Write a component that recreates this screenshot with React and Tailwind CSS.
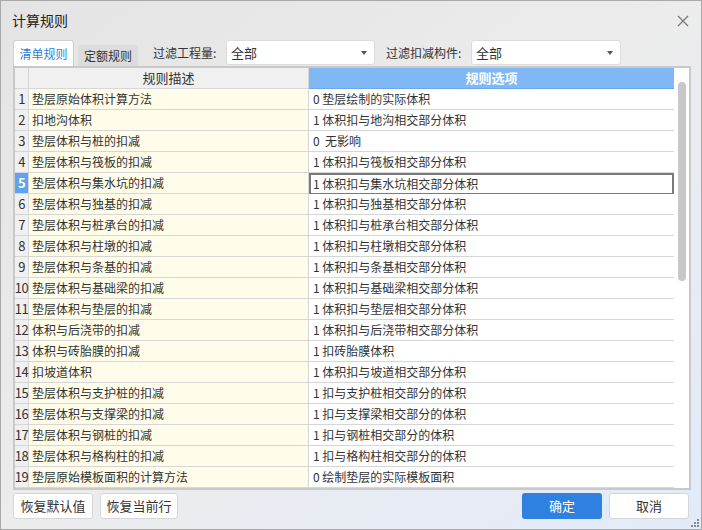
import React from 'react';

const rows = [
  ['垫层原始体积计算方法', '0 垫层绘制的实际体积'],
  ['扣地沟体积', '1 体积扣与地沟相交部分体积'],
  ['垫层体积与桩的扣减', '0  无影响'],
  ['垫层体积与筏板的扣减', '1 体积扣与筏板相交部分体积'],
  ['垫层体积与集水坑的扣减', '1 体积扣与集水坑相交部分体积'],
  ['垫层体积与独基的扣减', '1 体积扣与独基相交部分体积'],
  ['垫层体积与桩承台的扣减', '1 体积扣与桩承台相交部分体积'],
  ['垫层体积与柱墩的扣减', '1 体积扣与柱墩相交部分体积'],
  ['垫层体积与条基的扣减', '1 体积扣与条基相交部分体积'],
  ['垫层体积与基础梁的扣减', '1 体积扣与基础梁相交部分体积'],
  ['垫层体积与垫层的扣减', '1 体积扣与垫层相交部分体积'],
  ['体积与后浇带的扣减', '1 体积扣与后浇带相交部分体积'],
  ['体积与砖胎膜的扣减', '1 扣砖胎膜体积'],
  ['扣坡道体积', '1 体积扣与坡道相交部分体积'],
  ['垫层体积与支护桩的扣减', '1 扣与支护桩相交部分的体积'],
  ['垫层体积与支撑梁的扣减', '1 扣与支撑梁相交部分的体积'],
  ['垫层体积与钢桩的扣减', '1 扣与钢桩相交部分的体积'],
  ['垫层体积与格构柱的扣减', '1 扣与格构柱相交部分的体积'],
  ['垫层原始模板面积的计算方法', '0 绘制垫层的实际模板面积'],
];

const Select = ({ w }) => (
  <div className={`${w} h-[25px] bg-white rounded-[3px] border border-[#dcdcdc] flex items-center justify-between pl-[4px] pr-[7px]`}>
    <span className="text-[13px]">全部</span>
    <span className="w-0 h-0 border-l-[3px] border-r-[3px] border-t-[4px] border-l-transparent border-r-transparent border-t-[#555]" />
  </div>
);

const App = () => {
  return (
    <div
      className="w-[702px] h-[530px] border border-[#a9a9a9] bg-linear-to-br from-[#e4e4e4] via-[#ececec] to-[#e2eafa] text-[12px] text-[#333] relative overflow-hidden flex flex-col"
      style={{ fontFamily: '"Noto Sans CJK SC", "Noto Sans", sans-serif' }}
    >
      {/* title bar */}
      <div className="h-[39px] flex items-center justify-between pl-[11px] pr-[12px]">
        <span className="text-[14px] text-[#222]">计算规则</span>
        <svg width="12" height="12" viewBox="0 0 12 12" className="stroke-[#777]">
          <path d="M1 1L11 11M11 1L1 11" strokeWidth="1.2" fill="none" />
        </svg>
      </div>

      {/* tabs + filters */}
      <div className="h-[26px] flex items-end pl-[12px]">
        <div className="w-[61px] h-[26px] bg-white border border-b-0 border-[#cfcfcf] rounded-t-[3px] flex items-center justify-center text-[#2f7fd8]">
          清单规则
        </div>
        <div className="ml-[4px] w-[60px] h-[21px] bg-[#dcdcdc] rounded-t-[3px] flex items-center justify-center text-[#333]">
          定额规则
        </div>
        <div className="self-start ml-[15px] h-[25px] flex items-center">
          <span className="w-[73px]">过滤工程量:</span>
          <Select w="w-[149px]" />
          <span className="ml-[11px] w-[85px]">过滤扣减构件:</span>
          <Select w="w-[150px]" />
        </div>
      </div>

      {/* table */}
      <div className="mx-[12px] w-[678px] border-2 border-[#c9c9c9] flex bg-white">
        <div className="grid grid-cols-[14px_280px_365px] w-[659px]">
          <div className="h-[21px] bg-[#f0f0f0] border-r border-b border-[#d6d6d6]" />
          <div className="h-[21px] bg-[#f0f0f0] border-r border-b border-[#d6d6d6] flex items-center justify-center text-[13px]">规则描述</div>
          <div className="h-[21px] bg-[#80b8f6] border-b border-[#6aa7ec] flex items-center justify-center text-white font-bold text-[13px]">规则选项</div>
          {rows.map(([desc, opt], i) => {
            const sel = i === 4;
            return (
              <React.Fragment key={i}>
                <div
                  className={`h-[21px] border-r border-b border-[#d6d6d6] flex items-center justify-center tracking-[-0.5px] text-[13px] ${
                    sel ? 'bg-[#5ea3ef] text-white font-bold' : 'bg-[#f0f0f0]'
                  }`}
                >
                  {i + 1}
                </div>
                <div className="h-[21px] bg-[#fffde9] border-r border-b border-[#d6d6d6] flex items-center pl-[3px] whitespace-pre">{desc}</div>
                <div
                  className={`h-[21px] bg-white border-b flex items-center whitespace-pre ${
                    sel ? 'border-2 border-[#7a7a7a] pl-[2px]' : 'border-[#d6d6d6] pl-[4px]'
                  }`}
                >
                  {opt}
                </div>
              </React.Fragment>
            );
          })}
        </div>
        <div className="w-[15px] flex justify-center pt-[14px]">
          <div className="w-[8px] h-[199px] bg-[#c8c8c8] rounded-[4px]" />
        </div>
      </div>

      {/* buttons */}
      <div className="mt-[3px] px-[12px] flex items-center text-[13px]">
        <button className="w-[80px] h-[26px] bg-white border border-[#d6d6d6] rounded-[3px]">恢复默认值</button>
        <button className="ml-[7px] w-[78px] h-[26px] bg-white border border-[#d6d6d6] rounded-[3px]">恢复当前行</button>
        <button className="ml-auto w-[80px] h-[26px] bg-[#2f81e1] text-white rounded-[3px]">确定</button>
        <button className="ml-[7px] w-[80px] h-[26px] bg-white border border-[#d6d6d6] rounded-[3px]">取消</button>
      </div>

      {/* resize grip */}
      <svg width="8" height="8" viewBox="0 0 8 8" className="absolute right-[2px] bottom-[2px] fill-[#8a8a8a]">
        <rect x="6" y="0" width="2" height="2" />
        <rect x="3" y="3" width="2" height="2" />
        <rect x="6" y="3" width="2" height="2" />
        <rect x="0" y="6" width="2" height="2" />
        <rect x="3" y="6" width="2" height="2" />
        <rect x="6" y="6" width="2" height="2" />
      </svg>
    </div>
  );
};

export default App;
